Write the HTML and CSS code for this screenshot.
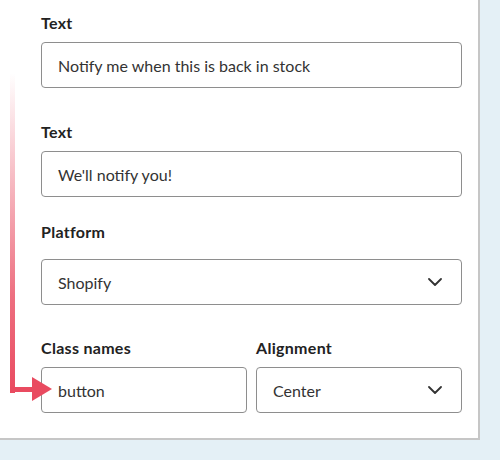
FILE: index.html
```
<!DOCTYPE html>
<html lang="en">
<head>
  <meta charset="UTF-8" />
  <meta name="viewport" content="width=device-width, initial-scale=1.0" />
  <title>Back in stock button</title>
  <link rel="stylesheet" href="styles.css">
</head>
<body>
  <!-- Settings panel -->
  <div class="panel">
    <div class="field">
      <label class="field-label">Text</label>
      <div class="input">Notify me when this is back in stock</div>
    </div>
    <div class="field">
      <label class="field-label">Text</label>
      <div class="input">We'll notify you!</div>
    </div>
    <div class="field field-select">
      <label class="field-label">Platform</label>
      <div class="input select">
        <span>Shopify</span>
        <svg class="chevron" width="14" height="8" viewBox="0 0 14 8"><path d="M1 1l6 6 6-6" fill="none" stroke="#333" stroke-width="1.8" stroke-linecap="round" stroke-linejoin="round"/></svg>
      </div>
    </div>
    <div class="row">
      <div class="field">
        <label class="field-label">Class names</label>
        <div class="input">button</div>
      </div>
      <div class="field">
        <label class="field-label">Alignment</label>
        <div class="input select">
          <span>Center</span>
          <svg class="chevron" width="14" height="8" viewBox="0 0 14 8"><path d="M1 1l6 6 6-6" fill="none" stroke="#333" stroke-width="1.8" stroke-linecap="round" stroke-linejoin="round"/></svg>
        </div>
      </div>
    </div>

    <!-- Pointer arrow to the class names input -->
    <svg class="pointer" width="60" height="340" viewBox="0 0 60 340">
      <defs>
        <linearGradient id="fade" x1="0" y1="0" x2="0" y2="1">
          <stop offset="0" stop-color="#e94b60" stop-opacity="0"/>
          <stop offset="0.7" stop-color="#e94b60" stop-opacity="0.8"/>
          <stop offset="1" stop-color="#e94b60"/>
        </linearGradient>
      </defs>
      <rect x="10" y="0" width="5" height="320" fill="url(#fade)"/>
      <rect x="10" y="314" width="24" height="5" fill="#e94b60"/>
      <path d="M32 304 L52 316 L32 328 Z" fill="#e94b60"/>
    </svg>
  </div>
</body>
</html>
```

FILE: styles.css
```
* {
  margin: 0;
  padding: 0;
  box-sizing: border-box;
}
html, body {
  height: 100%;
  background: #e4f0f6;
  font-family: 'Lato', 'Noto Sans', sans-serif;
  color: #2a2a2a;
  overflow: hidden;
}
/* White panel, clipped at top and left */
.panel {
  position: relative;
  width: 480px;
  height: 440px;
  background: #fff;
  border-right: 2px solid #c6c6c6;
  border-bottom: 2px solid #c6c6c6;
  padding: 13px 16px 0 41px;
}
.field {
  display: flex;
  flex-direction: column;
  margin-bottom: 34px;
}
.field-label {
  font-size: 16px;
  font-weight: 700;
  letter-spacing: 0.3px;
  line-height: 20px;
  color: #222;
  margin-bottom: 9px;
}
.field-select {
  margin-top: -9px;
  margin-bottom: 33px;
}
.field-select .field-label {
  margin-bottom: 17px;
}
.input {
  height: 46px;
  border: 1.5px solid #8e8e8e;
  border-radius: 4px;
  padding: 0 16px;
  display: flex;
  align-items: center;
  font-size: 16px;
  color: #333;
}
.select {
  justify-content: space-between;
}
.chevron {
  margin-right: 3px;
}
/* Two inputs side by side */
.row {
  display: grid;
  grid-template-columns: 1fr 1fr;
  gap: 9px;
}
.row .field {
  margin-bottom: 0;
}
.pointer {
  position: absolute;
  left: 0;
  top: 73px;
}
```
